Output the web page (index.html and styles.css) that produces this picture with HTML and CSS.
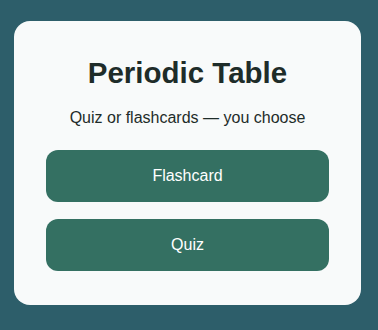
FILE: index.html
```html
<!DOCTYPE html>
<html>
<head>
<meta charset="utf-8">
<link rel="stylesheet" href="styles.css">
</head>
<body>
<main class="card">
  <h1 class="title">Periodic Table</h1>
  <p class="subtitle">Quiz or flashcards — you choose</p>
  <div class="actions">
    <button class="btn">Flashcard</button>
    <button class="btn">Quiz</button>
  </div>
</main>
</body>
</html>
```
FILE: styles.css
```css
html, body {
  margin: 0;
  padding: 0;
}
body {
  background: #2d5e6a;
  font-family: "Liberation Sans", Arial, sans-serif;
  padding: 21px 17px 25px 14px;
  min-height: 330px;
  box-sizing: border-box;
}
.card {
  background: #f8fafa;
  border-radius: 16px;
  padding: 35px 32px 34px;
  display: flex;
  flex-direction: column;
  align-items: stretch;
}
.title {
  margin: 0;
  text-align: center;
  font-size: 29.5px;
  font-weight: 700;
  color: #1e2c29;
}
.subtitle {
  margin: 19px 0 0;
  text-align: center;
  font-size: 16px;
  color: #1e2c29;
}
.actions {
  margin-top: 23px;
  display: flex;
  flex-direction: column;
  gap: 17px;
}
.btn {
  height: 52px;
  border: none;
  border-radius: 12px;
  background: #347062;
  color: #ffffff;
  font-family: inherit;
  font-size: 16px;
}
```
